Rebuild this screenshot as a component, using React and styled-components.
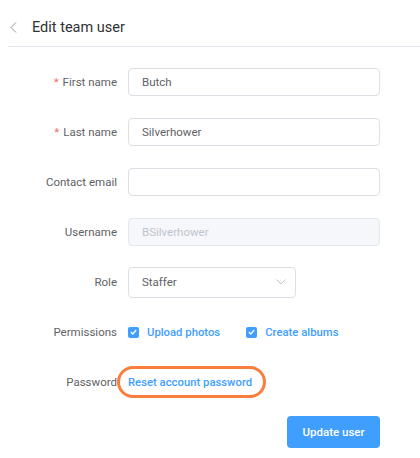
import styled, { createGlobalStyle } from "styled-components";

const GlobalStyle = createGlobalStyle`
	body {
		margin: 0;
		background: #fff;
		font-family: Roboto, "Liberation Sans", sans-serif;
	}
`;

const App = () => {
	return (
		<>
			<GlobalStyle />
			<Page>
				<Header>
					<BackIcon viewBox="0 0 7 11">
						<path d="M6 0.5 L1 5.5 L6 10.5" />
					</BackIcon>
					<Title>Edit team user</Title>
				</Header>
				<Form>
					<FormItem>
						<Label required>First name</Label>
						<Input defaultValue="Butch" />
					</FormItem>
					<FormItem>
						<Label required>Last name</Label>
						<Input defaultValue="Silverhower" />
					</FormItem>
					<FormItem>
						<Label>Contact email</Label>
						<Input defaultValue="" />
					</FormItem>
					<FormItem>
						<Label>Username</Label>
						<Input defaultValue="BSilverhower" disabled />
					</FormItem>
					<FormItem>
						<Label>Role</Label>
						<Select>
							<span>Staffer</span>
							<svg width="10" height="6" viewBox="0 0 10 6">
								<path
									d="M0.5 0.5 L5 5 L9.5 0.5"
									fill="none"
									stroke="#c0c4cc"
									strokeWidth="1"
								/>
							</svg>
						</Select>
					</FormItem>
					<FormItem>
						<Label>Permissions</Label>
						<CheckGroup>
							<Check>
								<Box>
									<svg width="7" height="6" viewBox="0 0 7 6">
										<path
											d="M0.8 3 L2.8 5 L6.2 1"
											fill="none"
											stroke="#fff"
											strokeWidth="1.2"
										/>
									</svg>
								</Box>
								Upload photos
							</Check>
							<Check>
								<Box>
									<svg width="7" height="6" viewBox="0 0 7 6">
										<path
											d="M0.8 3 L2.8 5 L6.2 1"
											fill="none"
											stroke="#fff"
											strokeWidth="1.2"
										/>
									</svg>
								</Box>
								Create albums
							</Check>
						</CheckGroup>
					</FormItem>
					<FormItem>
						<Label>Password</Label>
						<ResetLink>
							Reset account password
							<Ring />
						</ResetLink>
					</FormItem>
					<Actions>
						<Button>Update user</Button>
					</Actions>
				</Form>
			</Page>
		</>
	);
};
export default App;

const Page = styled.div`
	width: 420px;
	height: 458px;
	background: #fff;
`;

const Header = styled.header`
	display: flex;
	align-items: center;
	margin-left: 8px;
	padding-top: 8px;
	height: 38px;
	border-bottom: 1px solid #e4e7ed;
`;

const BackIcon = styled.svg`
	width: 7px;
	height: 11px;
	margin-left: 2px;
	fill: none;
	stroke: #909399;
	stroke-width: 1;
`;

const Title = styled.h1`
	margin: 0 0 0 15px;
	font-size: 14.5px;
	font-weight: 400;
	color: #303133;
`;

const Form = styled.form`
	padding: 20px 40px 0 8px;
`;

const FormItem = styled.div`
	display: flex;
	align-items: center;
	height: 30px;
	margin-bottom: 20px;
`;

const Label = styled.label`
	width: 120px;
	flex-shrink: 0;
	box-sizing: border-box;
	padding-right: 11px;
	text-align: right;
	font-size: 11.5px;
	color: #606266;
	&::before {
		content: ${(p) => (p.required ? '"*"' : "none")};
		color: #f56c6c;
		margin-right: 4px;
	}
`;

const Input = styled.input`
	width: 252px;
	height: 28px;
	box-sizing: border-box;
	padding: 0 13px;
	border: 1px solid ${(p) => (p.disabled ? "#e4e7ed" : "#dcdfe6")};
	border-radius: 4px;
	background: ${(p) => (p.disabled ? "#f5f7fa" : "#fff")};
	color: ${(p) => (p.disabled ? "#c0c4cc" : "#606266")};
	font-family: inherit;
	font-size: 11.5px;
	outline: none;
`;

const Select = styled.div`
	display: flex;
	align-items: center;
	justify-content: space-between;
	width: 168px;
	height: 31px;
	flex-shrink: 0;
	box-sizing: border-box;
	padding: 0 9px 0 13px;
	border: 1px solid #dcdfe6;
	border-radius: 4px;
	color: #606266;
	font-size: 11.5px;
`;

const CheckGroup = styled.div`
	display: flex;
	gap: 26px;
`;

const Check = styled.span`
	display: flex;
	align-items: center;
	gap: 8px;
	font-size: 11.3px;
	font-weight: 500;
	color: #409eff;
`;

const Box = styled.span`
	display: flex;
	align-items: center;
	justify-content: center;
	width: 11px;
	height: 11px;
	border-radius: 2px;
	background: #409eff;
`;

const ResetLink = styled.a`
	position: relative;
	font-size: 11.3px;
	font-weight: 500;
	color: #409eff;
	cursor: pointer;
`;

const Ring = styled.span`
	position: absolute;
	left: -11px;
	right: -14px;
	top: 50%;
	height: 32px;
	transform: translateY(-50%);
	box-sizing: border-box;
	border: 3px solid #fb7d3c;
	border-radius: 16px;
	pointer-events: none;
`;

const Actions = styled.div`
	display: flex;
	justify-content: flex-end;
	margin-top: -1px;
`;

const Button = styled.button`
	width: 93px;
	height: 32px;
	border: none;
	border-radius: 4px;
	background: #409eff;
	color: #fff;
	font-family: inherit;
	font-size: 11.5px;
	font-weight: 500;
	cursor: pointer;
`;
